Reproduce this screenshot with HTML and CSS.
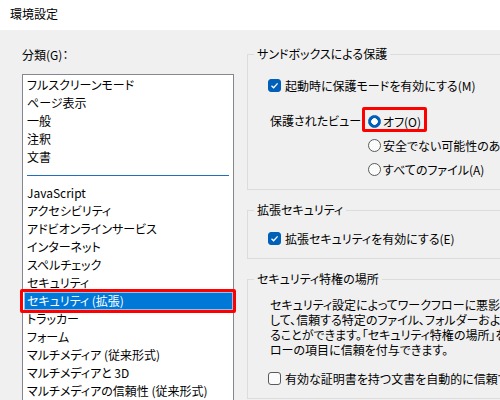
FILE: index.html
```html
<!DOCTYPE html>
<html lang="ja">
  <head>
    <meta charset="utf-8">
    <title>環境設定</title>
    <link rel="stylesheet" href="styles.css">
  </head>
  <body>
    <div class="titlebar">環境設定</div>
    <div class="main">
      <div class="categories">
        <div class="cat-label">分類(G)：</div>
        <ul class="cat-list">
          <li>フルスクリーンモード</li>
          <li>ページ表示</li>
          <li>一般</li>
          <li>注釈</li>
          <li>文書</li>
          <li class="sep"></li>
          <li>JavaScript</li>
          <li>アクセシビリティ</li>
          <li>アドビオンラインサービス</li>
          <li>インターネット</li>
          <li>スペルチェック</li>
          <li>セキュリティ</li>
          <li class="selected">セキュリティ (拡張)</li>
          <li>トラッカー</li>
          <li>フォーム</li>
          <li>マルチメディア (従来形式)</li>
          <li>マルチメディアと 3D</li>
          <li>マルチメディアの信頼性 (従来形式)</li>
        </ul>
      </div>

      <div class="settings">
        <div class="settings-inner">
          <fieldset class="group">
            <legend>サンドボックスによる保護</legend>
            <div class="check first">
              <span class="box checked"><svg width="11" height="11" viewBox="0 0 11 11"><polyline points="2.5,5.8 4.6,7.8 8.6,3.4" fill="none" stroke="#fff" stroke-width="1.3"/></svg></span>
              起動時に保護モードを有効にする(M)
            </div>
            <div class="view">
              <span class="view-label">保護されたビュー</span>
              <div class="radios">
                <div class="radio marked"><span class="dot on"></span>オフ(O)</div>
                <div class="radio"><span class="dot"></span>安全でない可能性のある場所のファイル(U)</div>
                <div class="radio"><span class="dot"></span>すべてのファイル(A)</div>
              </div>
            </div>
          </fieldset>

          <fieldset class="group">
            <legend>拡張セキュリティ</legend>
            <div class="check">
              <span class="box checked"><svg width="11" height="11" viewBox="0 0 11 11"><polyline points="2.5,5.8 4.6,7.8 8.6,3.4" fill="none" stroke="#fff" stroke-width="1.3"/></svg></span>
              拡張セキュリティを有効にする(E)
            </div>
          </fieldset>

          <fieldset class="group">
            <legend>セキュリティ特権の場所</legend>
            <p class="note">
              セキュリティ設定によってワークフローに悪影響が及ぶ場合は、特権の場所を使用<br>
              して、信頼する特定のファイル、フォルダーおよびホストを指定し、制限を回避す<br>
              ることができます。「セキュリティ特権の場所」を使用すると、ワークフ<br>
              ローの項目に信頼を付与できます。
            </p>
            <div class="check">
              <span class="box"></span>
              有効な証明書を持つ文書を自動的に信頼する(T)
            </div>
          </fieldset>
        </div>
      </div>
    </div>
  </body>
</html>
```

FILE: styles.css
```css
* {
margin: 0;
padding: 0;
box-sizing: border-box;
}

body {
width: 500px;
height: 400px;
overflow: hidden;
background: #f0f0f0;
color: #000;
font-family: "Noto Sans CJK JP", sans-serif;
font-size: 12px;
font-feature-settings: "palt";
}

.titlebar {
height: 30px;
line-height: 28px;
padding-left: 10px;
background: #fff;
}

.main {
display: flex;
gap: 13px;
padding-left: 22px;
}

.categories {
width: 212px;
flex-shrink: 0;
padding-top: 16px;
}

.cat-label {
line-height: 18px;
margin-bottom: 10px;
}

.cat-list {
list-style: none;
height: 340px;
padding-top: 1px;
background: #fff;
border: 1px solid #828790;
}

.cat-list li {
height: 18px;
line-height: 18px;
padding-left: 4px;
white-space: nowrap;
}

.cat-list .sep {
padding: 9px 4px 0 4px;
}

.cat-list .sep::before {
content: "";
display: block;
border-top: 1px solid #1f6fbf;
}

.cat-list .selected {
position: relative;
margin-left: 1px;
padding-left: 3px;
color: #fff;
background: #0078d7;
outline: 1px solid rgba(255,255,255,0.55);
outline-offset: -1px;
}

.cat-list .selected::after {
content: "";
position: absolute;
top: -3px;
bottom: -3px;
left: -4px;
right: -3px;
border: 3px solid #f00;
border-radius: 2px;
}

.settings {
width: 253px;
height: 370px;
flex-shrink: 0;
overflow: hidden;
}

.settings-inner {
width: 300px;
padding-top: 17px;
}

.group {
min-width: 0;
padding: 0 0 11px 0;
margin-bottom: 13px;
border: 1px solid #dcdcdc;
}

.group legend {
margin-left: 6px;
padding: 0 3px;
line-height: 14px;
}

.check {
display: flex;
align-items: center;
gap: 4px;
height: 18px;
margin: 12px 0 0 20px;
white-space: nowrap;
}

.check.first {
margin-top: 15px;
}

.box {
display: flex;
width: 13px;
height: 13px;
flex-shrink: 0;
align-items: center;
justify-content: center;
border: 1px solid #5a5a5a;
border-radius: 3px;
background: #fbfbfb;
}

.box.checked {
border-color: #005fb8;
background: #005fb8;
}

.view {
display: flex;
margin: 18px 0 0 22px;
}

.view-label {
width: 98px;
flex-shrink: 0;
line-height: 18px;
}

.radios {
display: flex;
flex-direction: column;
align-items: flex-start;
gap: 6px;
}

.radio {
position: relative;
display: flex;
align-items: center;
gap: 2px;
height: 18px;
white-space: nowrap;
}

.dot {
width: 13px;
height: 13px;
flex-shrink: 0;
border: 1px solid #5a5a5a;
border-radius: 50%;
background: #fbfbfb;
}

.dot.on {
border-color: #005fb8;
background: radial-gradient(circle, #fff 0 3px, #005fb8 3.6px);
}

.radio.marked::after {
content: "";
position: absolute;
top: -5px;
bottom: -2px;
left: -6px;
right: -6px;
border: 3px solid #f00;
border-radius: 2px;
}

.note {
margin: 11px 0 0 22px;
line-height: 15px;
white-space: nowrap;
}
```
